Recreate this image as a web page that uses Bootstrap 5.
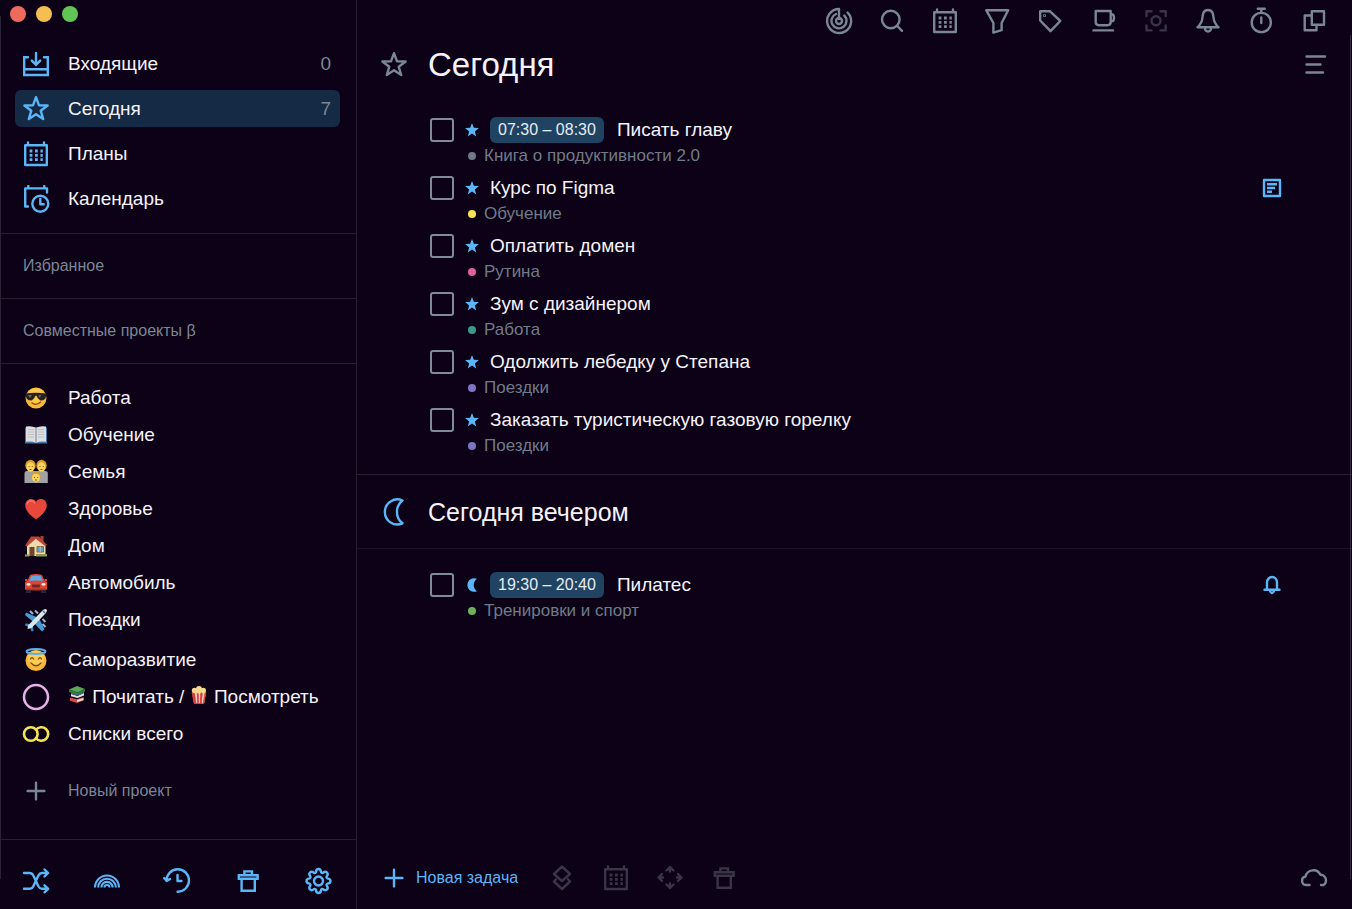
<!DOCTYPE html>
<html lang="ru" data-bs-theme="dark">
<head>
<meta charset="utf-8">
<meta name="viewport" content="width=device-width, initial-scale=1">
<title>Сегодня</title>
<link href="https://cdn.jsdelivr.net/npm/bootstrap@5.3.0/dist/css/bootstrap.min.css" rel="stylesheet">
<style>
:root{--ink:#f6f2fa;--muted:#7b8695;--dim:#3a3447;--blue:#5ab6f7;--line:#251f30}
body{background:#0c0116;color:var(--ink);font-family:"Liberation Sans",Arial,sans-serif;font-size:19px;line-height:28px}
.app{min-height:100vh;position:relative}
.app::before,.app::after{content:"";position:absolute;top:16px;bottom:30px;left:0;width:1px;background:#282232;pointer-events:none}
.app::after{left:auto;right:1px;top:35px;background:#332c3e}
.side{flex:0 0 357px;border-right:1px solid var(--line)}
.main-pane{min-width:0}
.i{width:28px;height:28px;flex:none;display:block;fill:none;stroke:currentColor;stroke-width:2.4;stroke-linejoin:round;stroke-linecap:round}
.i-sm{width:20px;height:20px}
.i-mark{width:14px;height:14px;flex:none;fill:var(--blue)}
.emo{width:28px;height:28px;flex:none}
.emo-in{width:18px;height:18px;margin:-4px 1px 0 0}
.ib{background:none;border:0;padding:0;color:inherit}
.titlebar{height:45px;padding:6px 10px;gap:10px}
.dot-btn{width:16px;height:16px;border:0;border-radius:50%;padding:0}
.nav-row{height:37px;padding:0 9px 0 7px;margin:0 16px 8px 15px;gap:18px;border-radius:6px;color:var(--ink);text-decoration:none}
.nav-row.on{background:#152a45}
.nav-row .i{color:var(--blue)}
.nav-row .num{color:var(--muted)}
.side-sec{height:65px;border-top:1px solid var(--line);padding:0 23px;font-size:16px;color:var(--muted)}
.projects{border-top:1px solid var(--line);padding-top:15px}
.proj{height:37px;padding:0 22px;gap:18px;color:var(--ink);text-decoration:none;white-space:nowrap}
.proj-gap{margin-top:3px}
.proj-new{color:var(--muted);font-size:16px;margin-top:20px}
.bar{height:70px;border-top:1px solid var(--line);padding:13px 24px 0 22px;color:var(--blue)}
.tools{height:42px;padding-right:24px;color:var(--muted)}
.tools-set{width:503px}
.head{padding:0 23px 0 23px;gap:20px;color:var(--muted)}
.head h1{font-size:33px;line-height:46px;color:var(--ink)}
.head h2{font-size:25px;line-height:30px;color:var(--ink)}
.evening{height:75px;border-top:1px solid var(--line);border-bottom:1px solid #1c1528}
.today-list{padding:28px 0 10px}
.evening-list{padding-top:22px}
.task{padding:0 70px 0 73px;margin-bottom:6px}
.task-line{height:28px}
.task .form-check-input{width:24px;height:24px;flex:none;margin:0;background-color:transparent;border:2px solid #808a98;border-radius:3px}
.when{background:#214362;font-size:16px;line-height:26px;padding:0 8px;border-radius:6px;margin-right:13px;color:#e4ecf5}
.task .i-mark{margin:0 11px}
.sub{height:24px;padding-left:38px;gap:8px;font-size:17px;color:#717b88}
.pt{width:8px;height:8px;border-radius:50%;flex:none}
.foot{height:63px;padding:0 24px 0 23px;gap:26px;color:var(--dim)}
.add{color:var(--blue);font-size:16px;gap:8px;margin-right:4px}
.blue{color:var(--blue)}
</style>
</head>
<body>
<svg class="d-none" aria-hidden="true">
<symbol id="star" viewBox="0 0 28 28"><path d="M14 2.200 17 10.300 25.600 10.500 18.700 15.700 21.200 24 14 19.200 6.800 24 9.300 15.700 2.400 10.500 11 10.300Z"/></symbol>
<symbol id="cal" viewBox="0 0 28 28"><path d="M3.200 5.200H24.800V25H3.200ZM6 2.500V5M22 2.500V5"/><path stroke-linecap="butt" stroke-width="2.800" stroke-dasharray="2.800 2.600" d="M7.600 11H20.800M7.600 15.300H20.800M7.600 19.600H20.800"/></symbol>
<symbol id="trash" viewBox="0 0 28 28"><path d="M4.800 8.200H23.600V11.800H4.800ZM10.400 8V4.400H18V8M7.600 12V23.800H20.800V12" stroke-linejoin="miter"/></symbol>
<symbol id="plus" viewBox="0 0 28 28"><path d="M14 5.600V22.400M5.600 14H22.400"/></symbol>
<symbol id="fstar" viewBox="0 0 14 14"><path d="M7 0 8.800 4.800 13.900 5.100 9.900 8.400 11.200 13.400 7 10.600 2.800 13.400 4.100 8.400 .1 5.100 5.200 4.800Z"/></symbol>
</svg>

<div class="app d-flex">
<aside class="side d-flex flex-column">
  <div class="titlebar d-flex">
    <button class="dot-btn" style="background:#ee6a5f" aria-label="Закрыть"></button>
    <button class="dot-btn" style="background:#f5bf4f" aria-label="Свернуть"></button>
    <button class="dot-btn" style="background:#61c554" aria-label="Развернуть"></button>
  </div>
  <nav class="pb-3">
    <a href="#" class="nav-row d-flex align-items-center"><svg class="i" viewBox="0 0 28 28"><path stroke-linejoin="miter" d="M6 7.300H2.200V25H25.800V7.300H22M2.200 19.200H25.800M14 3V14M9.800 10.600 14 14.800 18.200 10.600"/></svg><span>Входящие</span><span class="num ms-auto">0</span></a>
    <a href="#" class="nav-row on d-flex align-items-center"><svg class="i"><use href="#star"/></svg><span>Сегодня</span><span class="num ms-auto">7</span></a>
    <a href="#" class="nav-row d-flex align-items-center"><svg class="i"><use href="#cal"/></svg><span>Планы</span></a>
    <a href="#" class="nav-row mb-0 d-flex align-items-center"><svg class="i" viewBox="0 0 28 28"><path d="M6 21.500H3.200V3.400H25V7.500M6.300 1V3M22.300 1V3"/><circle cx="18.300" cy="18.700" r="8"/><path d="M18.300 14V19.200H21.800"/></svg><span>Календарь</span></a>
  </nav>
  <div class="side-sec d-flex align-items-center">Избранное</div>
  <div class="side-sec d-flex align-items-center">Совместные проекты β</div>
  <nav class="projects">
    <a href="#" class="proj d-flex align-items-center"><svg class="emo" viewBox="0 0 28 28"><circle cx="14" cy="14" r="10.500" fill="#f9b93a"/><circle cx="14" cy="12" r="8" fill="#ffd75a" opacity=".5"/><path d="M3.500 9.500Q14 8.200 24.500 9.500L23.600 14.200Q21.500 17 18 16.200 15.400 15 14.600 11.800H13.400Q12.600 15 10 16.200 6.500 17 4.400 14.200Z" fill="#26221f"/><path d="M6 11l4 0-2 3zM16.500 11h3l-2 3z" fill="#6b6660"/><path d="M9.500 18.500Q14 22.500 19 17.800" stroke="#8a4a14" stroke-width="1.300" fill="none"/></svg>Работа</a>
    <a href="#" class="proj d-flex align-items-center"><svg class="emo" viewBox="0 0 28 28"><path d="M3 6.500H25V22.500H3Z" fill="#3e76a8"/><path d="M4 5.500Q10 4.500 14 6.800 18 4.500 24 5.500V20.800Q18 20 14 22 10 20 4 20.800Z" fill="#dcdee1"/><path d="M14 6.800V22" stroke="#8d9096" stroke-width="1.200"/><path d="M6 8.500h6M6 11h6M6 13.500h6M6 16h6M16 8.500h6M16 11h6M16 13.500h6M16 16h6" stroke="#b4b7bc" stroke-width=".8"/></svg>Обучение</a>
    <a href="#" class="proj d-flex align-items-center"><svg class="emo" viewBox="0 0 28 28"><path d="M2.500 25V15Q2.500 13 5 13H23Q25.800 13 25.800 15V25Z" fill="#a0a2a5"/><path d="M14 14v11" stroke="#b5b6b8"/><g fill="#d99b2b"><ellipse cx="8.500" cy="7.400" rx="5.200" ry="5.600"/><ellipse cx="19.500" cy="7.400" rx="5.200" ry="5.600"/><ellipse cx="14" cy="18" rx="4.800" ry="4"/></g><g fill="#fbd45c"><ellipse cx="8.500" cy="9" rx="4" ry="4.800"/><ellipse cx="19.500" cy="9" rx="4" ry="4.800"/><ellipse cx="14" cy="19.800" rx="3.900" ry="4"/></g><path d="M6.500 8.500h1M9.800 8.500h1M17.500 8.500h1M20.800 8.500h1M12 19.500h1M15.300 19.500h1M7.500 11.500h2M18.500 11.500h2M13 22h2" stroke="#7d5318" stroke-width="1"/></svg>Семья</a>
    <a href="#" class="proj d-flex align-items-center"><svg class="emo" viewBox="0 0 28 28"><path d="M14 24.500C7 19.500 3.200 15 3.200 10.200 3.200 6.500 6 4 9 4 11.500 4 13.200 5.300 14 7 14.800 5.300 16.500 4 19 4 22 4 24.800 6.500 24.800 10.200 24.800 15 21 19.500 14 24.500Z" fill="#e8473c"/><path d="M5 9.500Q6 6 9.500 5.800 12 6 13 8.500" stroke="#f67a6c" stroke-width="1.500" fill="none"/></svg>Здоровье</a>
    <a href="#" class="proj d-flex align-items-center"><svg class="emo" viewBox="0 0 28 28"><path d="M18.500 4h3v5h-3z" fill="#a5432d"/><path d="M5 12.500 13 5.500 23.500 13V24H5Z" fill="#ecd9ae"/><path d="M3.200 13.500 9 4.500 17 4.500 25 13 23 14 13.800 6.800 5 14.500Z" fill="#bb4536"/><path d="M7.500 15h5v9h-5z" fill="#6d4528"/><path d="M15 14.500h6.500v5.500H15z" fill="#5aa0c4" stroke="#8f6d48"/><path d="M18.200 14.500V20" stroke="#e2dcc8" stroke-width=".7"/><path d="M3 22.500h4v2H3zM14 22h11v2.500H14z" fill="#8f9a54"/></svg>Дом</a>
    <a href="#" class="proj d-flex align-items-center"><svg class="emo" viewBox="0 0 28 28"><path d="M4 19h5v5H4zM19 19h5v5h-5z" fill="#2c2630"/><path d="M3 13 5.500 11.500 8 6Q14 4 20 6L22.500 11.500 25 13V20.500Q14 22.500 3 20.500Z" fill="#dc4434"/><path d="M7 12 9.300 7Q14 5.800 18.700 7L21 12Q14 11 7 12Z" fill="#62a7dc"/><path d="M3 10h2.500v2H3zM22.500 10H25v2h-2.500z" fill="#dc4434"/><ellipse cx="6.500" cy="15.300" rx="2.200" ry="1.400" fill="#ffe7dc"/><ellipse cx="21.500" cy="15.300" rx="2.200" ry="1.400" fill="#ffe7dc"/><path d="M9.500 15.500h9l-1 3h-7z" fill="#702822"/><path d="M5 20.200h18" stroke="#8e2d28"/></svg>Автомобиль</a>
    <a href="#" class="proj d-flex align-items-center"><svg class="emo" viewBox="0 0 28 28"><path d="M15.500 11.500 4 6.500 3 9 11.500 16ZM17 12 22.500 23.500 20 25.500 12 17Z" fill="#459bd8"/><path d="M8 18 3.500 17.500 3 19.500 8 21 9.500 25.500 11.500 25 11 20Z" fill="#3a8acb"/><path d="M24.500 3.500Q26 5 22.500 8.500L9.500 22 5.500 23 6 19.500 19.500 5.500Q23 2 24.500 3.500Z" fill="#dbe4ea"/><path d="M8 5l3 3M13 4.500l3 3M20.500 13l3 3M20.500 18l3 3" stroke="#9db7c9" stroke-width="2"/><path d="M21 5l2 2" stroke="#46657c" stroke-width="1.500"/></svg>Поездки</a>
    <a href="#" class="proj proj-gap d-flex align-items-center"><svg class="emo" viewBox="0 0 28 28"><circle cx="14" cy="14.500" r="10.500" fill="#f9b63b"/><circle cx="14" cy="12.500" r="8" fill="#ffda63" opacity=".6"/><ellipse cx="14" cy="5.500" rx="9.500" ry="2.600" fill="none" stroke="#5bb0e8" stroke-width="2"/><path d="M8.500 13Q10 10.300 11.500 13M16.500 13Q18 10.300 19.500 13M9 17Q14 22.500 19 17" stroke="#7b4613" stroke-width="1.400" fill="none" stroke-linecap="round"/></svg>Саморазвитие</a>
    <a href="#" class="proj d-flex align-items-center"><svg class="i" viewBox="0 0 28 28"><circle cx="14" cy="14" r="12" stroke="#e7b2ea" stroke-width="2.500"/></svg><span><svg class="emo-in" viewBox="0 0 18 18"><path d="M1 3.500 9 0 17 3 9.500 6.500Z" fill="#5aa653"/><path d="M1 3.500 9.500 6.500V9L1 6ZM9.500 6.500 17 3V5.500L9.500 9Z" fill="#2f7d3c"/><path d="M3 8 9.500 10 16 7V9.500L9.500 12 3 10.200Z" fill="#e4e1dc"/><path d="M3 7.200 9.500 9.200 16 6.500" stroke="#4a77a8" fill="none"/><path d="M2 11.500 9 13.300 15.500 11V14.500L9 17 2 14.800Z" fill="#d64a4a"/><path d="M9 14 15.500 12V14L9 16Z" fill="#eee6df"/></svg> Почитать / <svg class="emo-in" viewBox="0 0 18 18"><path d="M2 6H16L14 17.500H4Z" fill="#f3ece4"/><path d="M2 6H4.500L6 17.500H4ZM7 6H8.500V17.500H7.300ZM10.500 6H12.500L11.500 17.500H10ZM15 6H16L14 17.500H13Z" fill="#d63a33" stroke="#d63a33" stroke-width=".6"/><g fill="#f5d98c"><circle cx="4.500" cy="4.500" r="2.700"/><circle cx="9" cy="3" r="3"/><circle cx="13.300" cy="4.500" r="2.700"/><circle cx="9" cy="5.500" r="2.300"/></g></svg> Посмотреть</span></a>
    <a href="#" class="proj d-flex align-items-center"><svg class="i" viewBox="0 0 28 28"><g stroke="#f5e552" stroke-width="2.600"><circle cx="8.800" cy="14" r="6.800"/><path d="M14 9.800A6.800 6.800 0 1 1 14 18.200"/></g></svg>Списки всего</a>
    <a href="#" class="proj proj-new d-flex align-items-center"><svg class="i"><use href="#plus"/></svg>Новый проект</a>
  </nav>
  <div class="bar d-flex justify-content-between align-items-center mt-auto">
    <button class="ib" aria-label="Перемешать"><svg class="i" viewBox="0 0 28 28"><path d="M2 6H7.500Q10 6 11.200 8.300L16.500 19.500Q17.800 21.800 20 21.800H26M2 21.800H7.500Q10 21.800 11.200 19.500L16.500 8.300Q17.800 6 20 6H26M22.500 2.500 26.200 6 22.500 9.500M22.500 18.300 26.200 21.800 22.500 25.300"/></svg></button>
    <button class="ib" aria-label="Радуга"><svg class="i" viewBox="0 0 28 28"><path stroke-linecap="butt" stroke-width="2.100" d="M2 20.500A12 12 0 0 1 26 20.500M5.200 20.500A8.800 8.800 0 0 1 22.800 20.500M8.400 20.500A5.600 5.600 0 0 1 19.600 20.500M11.500 20.500A2.500 2.500 0 0 1 16.500 20.500"/></svg></button>
    <button class="ib" aria-label="История"><svg class="i" viewBox="0 0 28 28"><path d="M3.600 13.700A11.200 11.200 0 1 1 14.600 24.700M1.200 11.100 3.700 14.100 7 11.900M14.500 8V14H18.500"/></svg></button>
    <button class="ib" aria-label="Корзина"><svg class="i"><use href="#trash"/></svg></button>
    <button class="ib" aria-label="Настройки"><svg class="i" viewBox="-14.500 -14 28 28"><path d="M-2.600-8.800Q-2.300-12 0-12T2.600-8.800Q3.500-7.600 4.400-8.100 6.900-10.100 8.500-8.500T8.100-4.400Q7.600-3.500 8.800-2.600 12-2.300 12 0T8.800 2.600Q7.600 3.500 8.100 4.400 10.100 6.900 8.500 8.500T4.400 8.100Q3.500 7.600 2.600 8.800 2.300 12 0 12T-2.600 8.800Q-3.500 7.600-4.400 8.100-6.900 10.100-8.500 8.500T-8.100 4.400Q-7.600 3.500-8.800 2.600-12 2.300-12 0T-8.800-2.600Q-7.600-3.500-8.100-4.400-10.100-6.900-8.500-8.500T-4.400-8.100Q-3.500-7.600-2.600-8.800Z"/><circle r="4.500"/></svg></button>
  </div>
</aside>

<main class="main-pane flex-grow-1 d-flex flex-column">
  <div class="tools d-flex justify-content-end align-items-center">
    <div class="tools-set d-flex justify-content-between">
      <button class="ib" aria-label="Фокус"><svg class="i" viewBox="0 0 28 28"><path d="M14 12V2A12 12 0 1 0 22.600 5.500M11 7A7.500 7.500 0 1 0 19.300 8.600"/><circle cx="14" cy="14" r="3"/></svg></button>
      <button class="ib" aria-label="Поиск"><svg class="i" viewBox="0 0 28 28"><circle cx="12.800" cy="12.500" r="8.800"/><path d="M19.300 19 24 23.800"/></svg></button>
      <button class="ib" aria-label="Календарь"><svg class="i"><use href="#cal"/></svg></button>
      <button class="ib" aria-label="Фильтр"><svg class="i" viewBox="0 0 28 28"><path d="M3.200 3.200H25.200L18.600 16V23.200L10.400 25.600V16Z"/></svg></button>
      <button class="ib" aria-label="Метки"><svg class="i" viewBox="0 0 28 28"><path d="M4.200 4.200H13.800L24.300 14 14.500 24.200 4.200 13.500Z"/><circle cx="8.500" cy="8.500" r=".4"/></svg></button>
      <button class="ib" aria-label="Перерыв"><svg class="i" viewBox="0 0 28 28"><path d="M6.700 4H21.700V15Q21.700 18.200 18.500 18.200H9.900Q6.700 18.200 6.700 15ZM21.700 7.200H22.500Q25 7.200 25 10.800T22.500 14.400H21.700M4.500 23.400H24"/></svg></button>
      <button class="ib" style="color:var(--dim)" aria-label="Снимок"><svg class="i" viewBox="0 0 28 28"><path d="M4.500 9V4.300H9.500M18.500 4.300H23.700V9M23.700 18.500V23.400H18.500M9.500 23.400H4.500V18.500"/><circle cx="14" cy="13.800" r="4.500"/></svg></button>
      <button class="ib" aria-label="Уведомления"><svg class="i" viewBox="0 0 28 28"><path d="M14 3C9.500 3 8.800 6.500 8.400 11 8 15.500 6.500 17.500 3.500 20.200H24.500C21.500 17.500 20 15.500 19.600 11 19.200 6.500 18.500 3 14 3ZM10.800 20.500Q11 24.500 14 24.500T17.200 20.500"/></svg></button>
      <button class="ib" aria-label="Таймер"><svg class="i" viewBox="0 0 28 28"><circle cx="14.300" cy="15.500" r="9.600"/><path d="M10.800 1.800H17.800M14.300 2V5.500M14.300 10.500V16"/></svg></button>
      <button class="ib" aria-label="Окна"><svg class="i" viewBox="0 0 28 28"><path d="M11.800 4.200H24V17.700H11.800ZM11.500 8.500H4.700V23.200H16.500V18"/></svg></button>
    </div>
  </div>
  <header class="head d-flex align-items-center">
    <svg class="i"><use href="#star"/></svg><h1 class="m-0 fw-normal">Сегодня</h1>
    <button class="ib ms-auto" aria-label="Меню"><svg class="i" viewBox="0 0 28 28"><path d="M5.500 5.500H24M5.500 13.500H19.500M5.500 21.500H22"/></svg></button>
  </header>
  <ul class="today-list list-unstyled m-0">
    <li class="task"><div class="task-line d-flex align-items-center"><input class="form-check-input" type="checkbox" id="t1"><svg class="i-mark"><use href="#fstar"/></svg><span class="when">07:30 – 08:30</span><label for="t1">Писать главу</label></div><div class="sub d-flex align-items-center"><i class="pt" style="background:#6f7885"></i>Книга о продуктивности 2.0</div></li>
    <li class="task"><div class="task-line d-flex align-items-center"><input class="form-check-input" type="checkbox" id="t2"><svg class="i-mark"><use href="#fstar"/></svg><label for="t2">Курс по Figma</label><svg class="i i-sm blue ms-auto" viewBox="0 0 20 20" aria-label="Заметка"><path stroke-linecap="butt" d="M2 2H18V18H2ZM5 6.300H15M5 10H13M5 13.700H10"/></svg></div><div class="sub d-flex align-items-center"><i class="pt" style="background:#f5e552"></i>Обучение</div></li>
    <li class="task"><div class="task-line d-flex align-items-center"><input class="form-check-input" type="checkbox" id="t3"><svg class="i-mark"><use href="#fstar"/></svg><label for="t3">Оплатить домен</label></div><div class="sub d-flex align-items-center"><i class="pt" style="background:#e0629a"></i>Рутина</div></li>
    <li class="task"><div class="task-line d-flex align-items-center"><input class="form-check-input" type="checkbox" id="t4"><svg class="i-mark"><use href="#fstar"/></svg><label for="t4">Зум с дизайнером</label></div><div class="sub d-flex align-items-center"><i class="pt" style="background:#3a9a8a"></i>Работа</div></li>
    <li class="task"><div class="task-line d-flex align-items-center"><input class="form-check-input" type="checkbox" id="t5"><svg class="i-mark"><use href="#fstar"/></svg><label for="t5">Одолжить лебедку у Степана</label></div><div class="sub d-flex align-items-center"><i class="pt" style="background:#7d75c4"></i>Поездки</div></li>
    <li class="task"><div class="task-line d-flex align-items-center"><input class="form-check-input" type="checkbox" id="t6"><svg class="i-mark"><use href="#fstar"/></svg><label for="t6">Заказать туристическую газовую горелку</label></div><div class="sub d-flex align-items-center"><i class="pt" style="background:#7d75c4"></i>Поездки</div></li>
  </ul>
  <header class="head evening d-flex align-items-center">
    <svg class="i blue" viewBox="0 0 28 28"><path d="M22.500 2.500A12.500 12.500 0 1 0 22.500 25.300 14.500 14.500 0 0 1 22.500 2.500Z"/></svg><h2 class="m-0 fw-normal">Сегодня вечером</h2>
  </header>
  <ul class="evening-list list-unstyled m-0">
    <li class="task"><div class="task-line d-flex align-items-center"><input class="form-check-input" type="checkbox" id="t7"><svg class="i-mark" viewBox="0 0 14 14"><path d="M12 .8A6.800 6.800 0 1 0 12 13.200 7.500 7.500 0 0 1 12 .8Z"/></svg><span class="when">19:30 – 20:40</span><label for="t7">Пилатес</label><svg class="i i-sm blue ms-auto" viewBox="0 0 20 20" aria-label="Напоминание"><path d="M5 14.500V7.500A5 5.500 0 0 1 15 7.500V14.500M2.500 14.800H17.500M8.200 16.500Q10 19.500 11.800 16.500"/></svg></div><div class="sub d-flex align-items-center"><i class="pt" style="background:#6cb158"></i>Тренировки и спорт</div></li>
  </ul>
  <footer class="foot d-flex align-items-center mt-auto">
    <button class="ib add d-flex align-items-center"><svg class="i"><use href="#plus"/></svg>Новая задача</button>
    <button class="ib" aria-label="Приоритет"><svg class="i" viewBox="0 0 28 28"><path d="M14 2.500 22 10 14 17 6 10ZM8 15.300 6 17.500 14 25 22 17.500 20 15.300"/></svg></button>
    <button class="ib" aria-label="Дата"><svg class="i"><use href="#cal"/></svg></button>
    <button class="ib" aria-label="Переместить"><svg class="i" viewBox="0 0 28 28"><path d="M10.500 6.500 14 3 17.500 6.500M14 3V7.500M10.500 20.500 14 24 17.500 20.500M14 24V19.500M6 10 2.500 13.500 6 17M2.500 13.500H7M22 10 25.500 13.500 22 17M25.500 13.500H21"/></svg></button>
    <button class="ib" aria-label="Удалить"><svg class="i"><use href="#trash"/></svg></button>
    <button class="ib ms-auto" style="color:var(--muted)" aria-label="Синхронизация"><svg class="i" viewBox="0 0 28 28"><path d="M9.500 21H6A4.300 4.300 0 0 1 5.500 12.500 8 8 0 0 1 20.500 10.800 5.500 5.500 0 0 1 26 16.500Q26 19.500 23.500 21H21"/></svg></button>
  </footer>
</main>
</div>
<script src="https://cdn.jsdelivr.net/npm/bootstrap@5.3.0/dist/js/bootstrap.bundle.min.js"></script>
</body>
</html>
